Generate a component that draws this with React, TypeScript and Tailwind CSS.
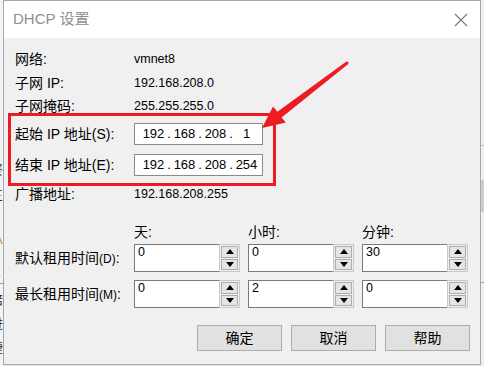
import React from "react";

const F = "font-['Liberation_Sans','Noto_Sans_CJK_SC',sans-serif]";

function Arrow({ up }: { up: boolean }) {
  return (
    <svg width="8" height="5" viewBox="0 0 8 5">
      {up ? <path d="M4 0L8 5H0Z" fill="#000" /> : <path d="M0 0H8L4 5Z" fill="#000" />}
    </svg>
  );
}

function Spin({ v }: { v: string }) {
  return (
    <div className="flex h-[28px] w-[106px]">
      <div className="flex-1 border border-r-0 border-[#7a7a7a] bg-white pl-[3px] pt-[1px] text-[12.5px] leading-[13px] text-black">
        {v}
      </div>
      <div className="flex w-[21px] flex-col gap-px border border-[#c8c8c8] bg-[#f0f0f0] p-px">
        <div className="flex flex-1 items-center justify-center border border-[#adadad] bg-[#e5e5e5]">
          <Arrow up />
        </div>
        <div className="flex flex-1 items-center justify-center border border-[#adadad] bg-[#e5e5e5]">
          <Arrow up={false} />
        </div>
      </div>
    </div>
  );
}

function IpBox({ parts }: { parts: string[] }) {
  return (
    <div className="flex h-[22px] w-[129px] items-center border border-[#8a8a8a] bg-white pl-[7px] text-[13px] leading-[20px] text-black">
      {parts.map((p, i) => (
        <React.Fragment key={i}>
          <span className="w-[23px] text-center">{p}</span>
          {i < 3 && <span className="w-[8px] text-center">.</span>}
        </React.Fragment>
      ))}
    </div>
  );
}

function Btn({ t }: { t: string }) {
  return (
    <div className="flex h-[26px] w-[85px] items-center justify-center border border-[#adadad] bg-[#e1e1e1] text-[14px] text-black">
      {t}
    </div>
  );
}

export default function App() {
  return (
    <div className={`relative flex h-[366px] w-[484px] overflow-hidden bg-[#e6e6e6] ${F}`}>
      {/* left background fragment strip */}
      <div className="flex h-full w-[3px] flex-col overflow-hidden bg-[#f3f3f3] text-[13px] leading-[16px] text-[#333]">
        <div className="h-[134px]" />
        <div className="ml-[-5px]">t</div>
        <div className="h-[12px]" />
        <div className="ml-[-10px]">终</div>
        <div className="h-[10px]" />
        <div className="ml-[-10px]">三</div>
        <div className="h-[28px]" />
        <div className="ml-[-6px] text-[#d08a2a]">A</div>
        <div className="h-[16px]" />
        <div className="ml-[-6px]">x</div>
        <div className="mt-[3px] h-px w-full bg-[#a0a0a0]" />
        <div className="h-[8px]" />
        <div className="ml-[-10px]">陪</div>
        <div className="h-[8px]" />
        <div className="ml-[-10px]">进</div>
        <div className="h-[8px]" />
        <div className="ml-[-10px]">捷</div>
      </div>

      {/* dialog */}
      <div className="flex h-[365px] w-[478px] flex-col border border-[#a8a8a8] bg-[#f0f0f0]">
        <div className="flex h-[37px] items-center justify-between bg-white pl-[9px] pr-[12px]">
          <span className="text-[15px] text-[#8f8f8f]">DHCP 设置</span>
          <svg width="14" height="14" viewBox="0 0 14 14" className="mt-[1px]">
            <path d="M1 1L13 13M13 1L1 13" stroke="#777" strokeWidth="1.1" />
          </svg>
        </div>

        <div className="flex flex-col pl-[11px] text-[14px] text-black">
          <div className="mt-[11px] flex h-[20px] items-center">
            <span className="w-[119px]">网络:</span>
            <span className="text-[12.5px]">vmnet8</span>
          </div>
          <div className="mt-[4px] flex h-[20px] items-center">
            <span className="w-[119px]">子网 IP:</span>
            <span className="text-[12.5px]">192.168.208.0</span>
          </div>
          <div className="mt-[3px] flex h-[20px] items-center">
            <span className="w-[119px]">子网掩码:</span>
            <span className="text-[12.5px]">255.255.255.0</span>
          </div>

          <div className="ml-[-7px] mt-[-3px] flex w-[268px] flex-col gap-[9px] border-[3px] border-[#ed1c24] pb-[7px] pl-[4px] pt-[7px]">
            <div className="flex h-[22px] items-center">
              <span className="w-[119px]">起始 IP 地址(S):</span>
              <IpBox parts={["192", "168", "208", "1"]} />
            </div>
            <div className="flex h-[22px] items-center">
              <span className="w-[119px]">结束 IP 地址(E):</span>
              <IpBox parts={["192", "168", "208", "254"]} />
            </div>
          </div>

          <div className="flex h-[16px] items-center">
            <span className="w-[119px]">广播地址:</span>
            <span className="text-[12.5px]">192.168.208.255</span>
          </div>

          <div className="mt-[22px] flex h-[16px] items-center">
            <span className="w-[119px]" />
            <span className="w-[114px]">天:</span>
            <span className="w-[114px]">小时:</span>
            <span>分钟:</span>
          </div>

          <div className="mt-[4px] flex h-[28px] items-center">
            <span className="w-[119px]">
              默认租用时间<span className="text-[12px]">(D)</span>:
            </span>
            <div className="flex gap-[8px]">
              <Spin v="0" />
              <Spin v="0" />
              <Spin v="30" />
            </div>
          </div>
          <div className="mt-[8px] flex h-[28px] items-center">
            <span className="w-[119px]">
              最长租用时间<span className="text-[12px]">(M)</span>:
            </span>
            <div className="flex gap-[8px]">
              <Spin v="0" />
              <Spin v="2" />
              <Spin v="0" />
            </div>
          </div>

          <div className="mt-[17px] flex justify-end gap-[9px] pr-[10px]">
            <Btn t="确定" />
            <Btn t="取消" />
            <Btn t="帮助" />
          </div>
        </div>
      </div>

      {/* right background strip */}
      <div className="flex h-full w-[3px] flex-col bg-[#f0f0f0]">
        <div className="h-[145px]" />
        <div className="h-px bg-[#c0c0c0]" />
        <div className="h-[34px]" />
        <div className="h-[32px] bg-[#cdcdcd]" />
        <div className="h-[70px]" />
        <div className="h-px bg-[#a8a8a8]" />
      </div>

      {/* annotation arrow */}
      <svg className="pointer-events-none absolute left-0 top-0" width="484" height="366" viewBox="0 0 484 366">
        <polygon
          points="262,128 273,106.5 277.4,111.8 346.1,61.8 347.9,64.2 281.6,117.4 285.8,122.6"
          fill="#ed1c24"
        />
        <circle cx="347" cy="63" r="1.5" fill="#ed1c24" />
      </svg>
    </div>
  );
}
